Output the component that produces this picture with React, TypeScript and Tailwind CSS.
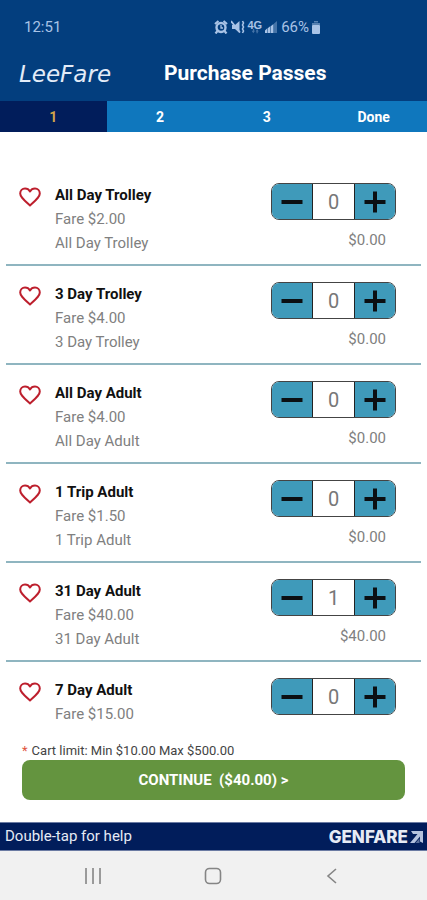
import React, { useState } from 'react';

interface Pass {
  id: string;
  name: string;
  fare: number;
  collapsed?: boolean;
}

const passes: Pass[] = [
  { id: 'all-day-trolley', name: 'All Day Trolley', fare: 2 },
  { id: '3-day-trolley', name: '3 Day Trolley', fare: 4 },
  { id: 'all-day-adult', name: 'All Day Adult', fare: 4 },
  { id: '1-trip-adult', name: '1 Trip Adult', fare: 1.5 },
  { id: '31-day-adult', name: '31 Day Adult', fare: 40 },
  { id: '7-day-adult', name: '7 Day Adult', fare: 15, collapsed: true },
];

const steps = ['1', '2', '3', 'Done'];

const money = (value: number) => `$${value.toFixed(2)}`;

function StatusBar() {
  return (
    <div className="flex h-[54px] items-center justify-between pl-6 pr-[106px] text-[15px] text-[#a9c3e6]">
      <span>12:51</span>
      <div className="flex items-center">
        {/* Alarm */}
        <svg className="h-[14px] w-[14px]" viewBox="0 0 14 14" fill="none" stroke="currentColor">
          <circle cx="7" cy="7.5" r="4.5" strokeWidth="2.4" />
          <path d="M1 4 4.500 1M13 4 9.500 1M3.500 11 1.500 13.500M10.500 11l2 2.500" strokeWidth="2.200" />
          <path d="M7 5v3h2" strokeWidth="1.3" />
        </svg>
        {/* Vibrate / muted */}
        <svg className="ml-[3px] h-[14px] w-[14px]" viewBox="0 0 14 14" fill="none" stroke="currentColor">
          <path d="M1 5h3l4.500-4v12L4 9H1z" fill="currentColor" stroke="none" />
          <path d="M0 1l9 11.500" strokeWidth="1.8" />
          <path d="M11.500 1l1 2-1 2 1 2-1 2 1 2-1 2" strokeWidth="1.600" />
        </svg>
        <div className="ml-[2px] flex flex-col items-center">
          <span className="font-['Liberation_Sans',sans-serif] text-[11px] font-bold leading-[8px]">4G</span>
          <svg className="h-[5px] w-[12px] opacity-40" viewBox="0 0 12 6" fill="currentColor">
            <path d="M2 2h1.500V0H5v2h1L4 5zM8.500 0l2 3H9.300v2H7.800V3h-1z" />
          </svg>
        </div>
        {/* Signal */}
        <svg className="ml-[3px] h-[12px] w-[12px]" viewBox="0 0 12 12" fill="currentColor">
          <path d="M0 12V9.500L2.500 7v5zM3 12V7l2.500-2v7zM6 12V5l2.500-2v9z" />
          <path d="M9 12V2.500L12 0v12z" opacity="0.4" />
        </svg>
        <span className="ml-1">66%</span>
        {/* Battery */}
        <svg className="ml-[2px] h-[13px] w-[10px]" viewBox="0 0 10 13" fill="currentColor">
          <path d="M3 0h4v1.500H3zM1 2h8v2.500H1z" opacity="0.5" />
          <rect x="1" y="4" width="8" height="9" rx="1" />
        </svg>
      </div>
    </div>
  );
}

function HeartIcon() {
  return (
    <svg className="h-5 w-6" viewBox="0 0 24 20" fill="none" stroke="#bd1f2d" strokeWidth="2" strokeLinejoin="round">
      <path d="M12 18.500 10.700 17.300C5 12.200 2.200 9.600 2.200 6.400 2.200 3.600 4.300 1.500 7 1.500c1.900 0 3.900 1 5 2.900 1.100-1.900 3.100-2.900 5-2.900 2.700 0 4.800 2.100 4.800 4.900 0 3.200-2.800 5.800-8.500 10.900z" />
    </svg>
  );
}

interface PassRowProps {
  pass: Pass;
  quantity: number;
  onChange: (quantity: number) => void;
}

function PassRow({ pass, quantity, onChange }: PassRowProps) {
  return (
    <li className="flex items-start border-b-2 border-[#8fb5c0] pb-[9px] pl-3 pr-[25px] pt-4 last:border-0 last:pb-0">
      <button type="button" aria-label={`Favorite ${pass.name}`} className="mt-1">
        <HeartIcon />
      </button>
      <div className="ml-[13px] flex-1 text-[15px] leading-6 text-[#808080]">
        <h2 className="font-bold text-[#111111]">{pass.name}</h2>
        <p>Fare {money(pass.fare)}</p>
        {!pass.collapsed && <p>{pass.name}</p>}
      </div>
      <div className="flex flex-col items-end">
        <div className="flex h-[37px] w-[125px] overflow-hidden rounded-lg border border-[#444444] bg-white">
          <button
            type="button"
            aria-label={`Remove ${pass.name}`}
            onClick={() => onChange(Math.max(0, quantity - 1))}
            className="flex w-[41px] items-center justify-center border-r border-[#222222] bg-[#3f9aba]"
          >
            <svg className="h-[22px] w-[22px]" viewBox="0 0 22 22" stroke="#0b0f12" strokeWidth="4">
              <path d="M0.500 11h21" />
            </svg>
          </button>
          <input
            type="text"
            inputMode="numeric"
            aria-label={`${pass.name} quantity`}
            value={quantity}
            onChange={(e) => onChange(Number(e.target.value) || 0)}
            className="w-0 flex-1 text-center text-xl text-[#777777] outline-none"
          />
          <button
            type="button"
            aria-label={`Add ${pass.name}`}
            onClick={() => onChange(quantity + 1)}
            className="flex w-[41px] items-center justify-center border-l border-[#222222] bg-[#3f9aba]"
          >
            <svg className="h-[22px] w-[22px]" viewBox="0 0 22 22" stroke="#0b0f12" strokeWidth="4">
              <path d="M0.500 11h21M11 .5v21" />
            </svg>
          </button>
        </div>
        {!pass.collapsed && (
          <span className="mr-[10px] mt-2 text-[15px] leading-6 text-[#808080]">
            {money(pass.fare * quantity)}
          </span>
        )}
      </div>
    </li>
  );
}

export default function App() {
  const [quantities, setQuantities] = useState<Record<string, number>>({ '31-day-adult': 1 });

  const total = passes.reduce((sum, pass) => sum + pass.fare * (quantities[pass.id] ?? 0), 0);

  return (
    <div className="flex min-h-screen flex-col bg-white font-[Roboto,'Liberation_Sans',sans-serif]">
      {/* Header */}
      <header className="bg-[#033e7e]">
        <StatusBar />
        <div className="flex h-[47px] items-center pb-2 pl-[19px]">
          <span className="font-['DejaVu_Sans',sans-serif] text-[23px] italic leading-6 text-[#e3ecf8]">LeeFare</span>
          <h1 className="ml-[53px] text-[21px] font-bold text-white">Purchase Passes</h1>
        </div>
      </header>

      {/* Steps */}
      <nav className="grid h-[31px] shrink-0 grid-cols-4 bg-[#0f77bd] text-sm font-bold text-white">
        {steps.map((step, index) => (
          <button
            key={step}
            type="button"
            className={index === 0 ? 'bg-[#011d5b] text-[#d2a449]' : ''}
          >
            {step}
          </button>
        ))}
      </nav>

      {/* Pass list */}
      <main className="flex-1 px-[6px] pt-[35px]">
        <ul className="flex flex-col">
          {passes.map((pass) => (
            <PassRow
              key={pass.id}
              pass={pass}
              quantity={quantities[pass.id] ?? 0}
              onChange={(quantity) => setQuantities({ ...quantities, [pass.id]: quantity })}
            />
          ))}
        </ul>
      </main>

      {/* Checkout */}
      <section className="px-[22px] pb-[22px] pt-4">
        <p className="text-[13px] leading-[18px] text-[#444444]">
          <span className="mr-1 text-[#e0533d]">*</span>
          Cart limit: Min $10.00 Max $500.00
        </p>
        <button type="button" className="h-10 w-full rounded-lg bg-[#64943f] text-[15px] font-bold text-white">
          CONTINUE &nbsp;({money(total)}) &gt;
        </button>
      </section>

      {/* Footer */}
      <footer className="flex h-[29px] shrink-0 items-center justify-between border-y border-[#6b7ba3] bg-[#011d5b] pl-[5px] pr-1 text-white">
        <span className="text-[15px] text-[#e6ebf5]">Double-tap for help</span>
        <span className="flex items-center gap-[2px] font-[Inter,sans-serif] text-[17px] font-extrabold leading-5 text-[#e6ebf5]">
          GENFARE
          <svg className="h-3 w-[13px]" viewBox="0 0 13 12" fill="#b5c3de">
            <path d="M1 0h12v12l-3-1.500V5.500L4.500 12H0l7.500-9H3z" />
            <path d="M5.500 12 9.500 7.500V12z" opacity="0.5" />
          </svg>
        </span>
      </footer>

      {/* System navigation */}
      <nav className="flex h-[49px] shrink-0 items-center justify-between bg-[#f1f1f1] pl-[84px] pr-[86px] text-[#858585]">
        <button type="button" aria-label="Recent apps">
          <svg className="h-4 w-[18px]" viewBox="0 0 18 16" stroke="currentColor" strokeWidth="1.600">
            <path d="M2 0v16M9 0v16M16 0v16" />
          </svg>
        </button>
        <button type="button" aria-label="Home">
          <svg className="h-[18px] w-[18px]" viewBox="0 0 18 18" fill="none" stroke="currentColor" strokeWidth="1.600">
            <rect x="1.500" y="1.500" width="15" height="15" rx="4" />
          </svg>
        </button>
        <button type="button" aria-label="Back">
          <svg className="h-4 w-[18px]" viewBox="0 0 18 16" fill="none" stroke="currentColor" strokeWidth="1.600">
            <path d="M13 1 5 8l8 7" />
          </svg>
        </button>
      </nav>
    </div>
  );
}
